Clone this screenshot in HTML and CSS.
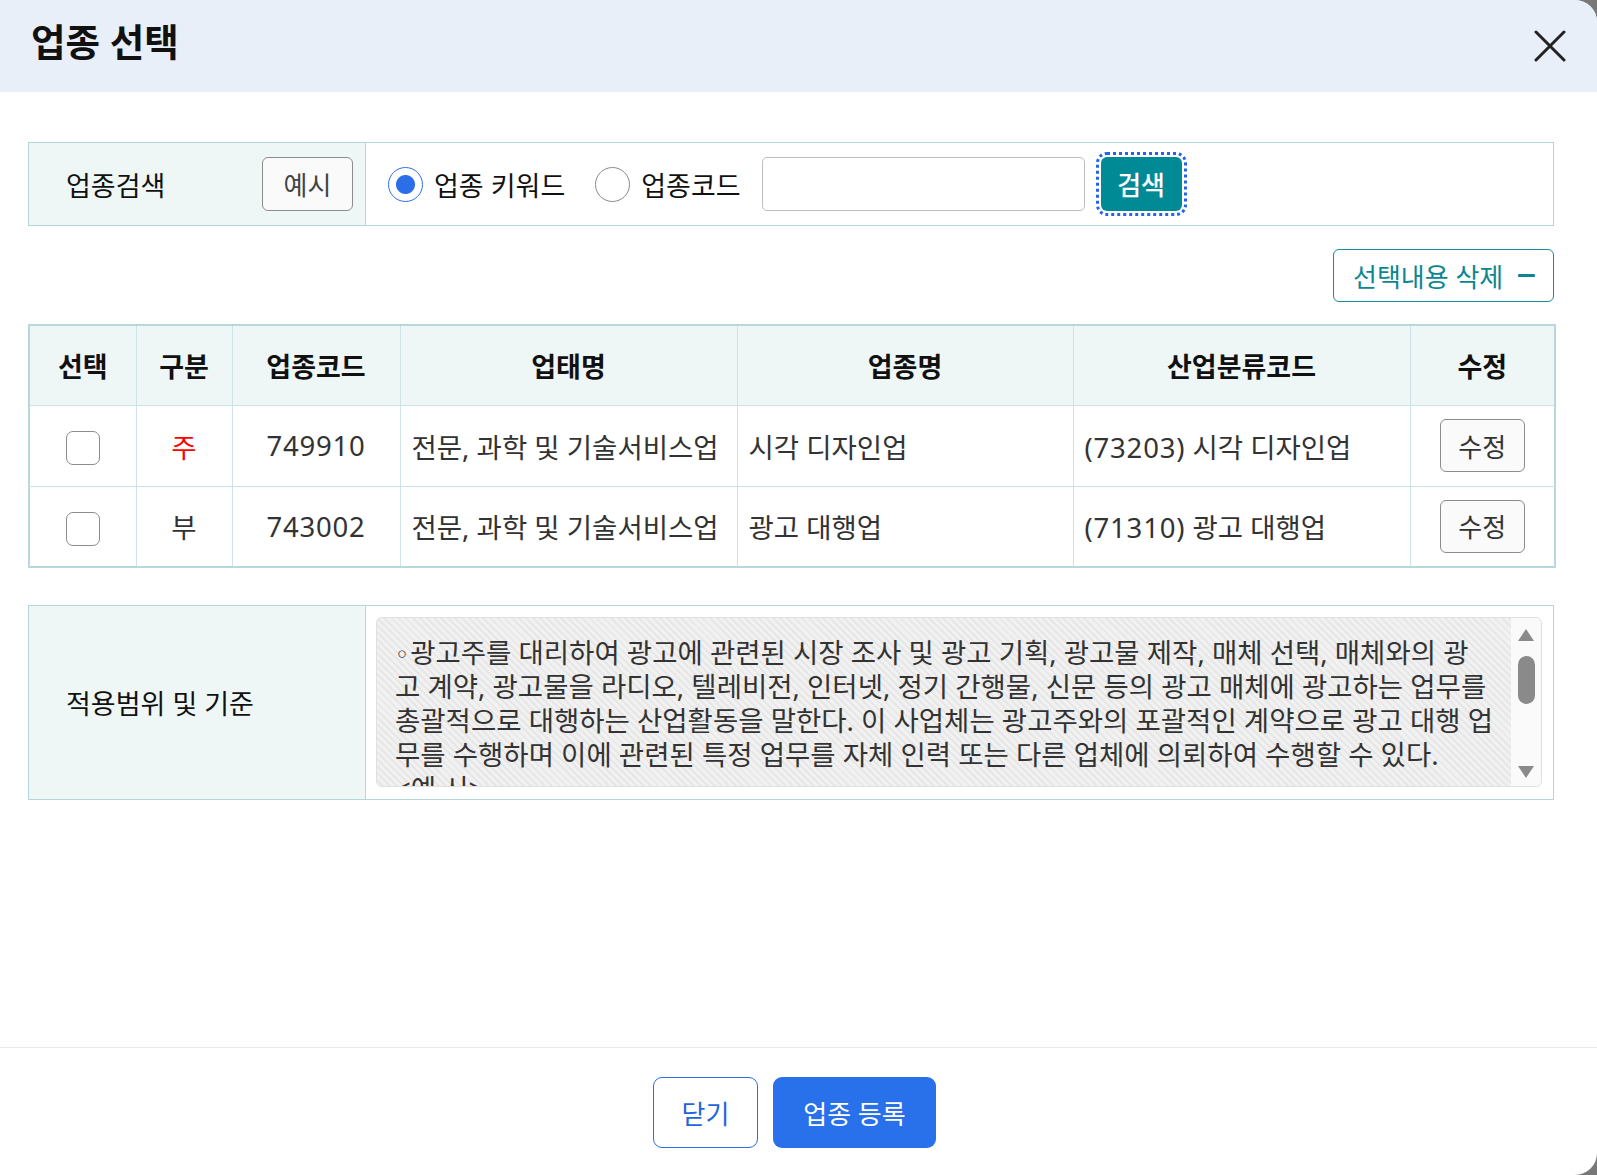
FILE: index.html
```html
<!DOCTYPE html>
<html lang="ko">
<head>
<meta charset="utf-8">
<title>업종 선택</title>
<link rel="stylesheet" href="styles.css">
</head>
<body>
<div class="dialog">
  <header class="dlg-head">
    <h1 class="dlg-title">업종 선택</h1>
    <button class="close-btn" type="button" aria-label="닫기">
      <svg width="32" height="32" viewBox="0 0 32 32"><path d="M2 2 L30 30 M30 2 L2 30" stroke="#222" stroke-width="3" stroke-linecap="round" fill="none"/></svg>
    </button>
  </header>

  <main class="dlg-body">
    <div class="form-box search-box">
      <div class="label-cell split">
        <span>업종검색</span>
        <button class="btn-gray btn-example" type="button">예시</button>
      </div>
      <div class="field-cell search-fields">
        <label class="radio-item"><input type="radio" name="type" class="radio" checked><span>업종 키워드</span></label>
        <label class="radio-item"><input type="radio" name="type" class="radio"><span>업종코드</span></label>
        <input type="text" class="text-input">
        <button class="btn-search" type="button">검색</button>
      </div>
    </div>

    <div class="toolbar">
      <button class="btn-del" type="button"><span>선택내용 삭제</span><span class="minus"></span></button>
    </div>

    <table class="grid">
      <colgroup>
        <col class="c1"><col class="c2"><col class="c3"><col class="c4"><col class="c5"><col class="c6"><col class="c7">
      </colgroup>
      <thead>
        <tr><th>선택</th><th>구분</th><th>업종코드</th><th>업태명</th><th>업종명</th><th>산업분류코드</th><th>수정</th></tr>
      </thead>
      <tbody>
        <tr>
          <td class="center"><input type="checkbox" class="check"></td>
          <td class="center main-type">주</td>
          <td class="center num">749910</td>
          <td>전문, 과학 및 기술서비스업</td>
          <td>시각 디자인업</td>
          <td><span class="num">(73203)</span> 시각 디자인업</td>
          <td class="center"><button class="btn-gray btn-edit" type="button">수정</button></td>
        </tr>
        <tr>
          <td class="center"><input type="checkbox" class="check"></td>
          <td class="center">부</td>
          <td class="center num">743002</td>
          <td>전문, 과학 및 기술서비스업</td>
          <td>광고 대행업</td>
          <td><span class="num">(71310)</span> 광고 대행업</td>
          <td class="center"><button class="btn-gray btn-edit" type="button">수정</button></td>
        </tr>
      </tbody>
    </table>

    <div class="form-box desc-box">
      <div class="label-cell">적용범위 및 기준</div>
      <div class="field-cell desc-cell">
        <div class="readonly-area">
          <div class="area-text"><span class="bullet">◦</span>광고주를 대리하여 광고에 관련된 시장 조사 및 광고 기획, 광고물 제작, 매체 선택, 매체와의 광<br>고 계약, 광고물을 라디오, 텔레비전, 인터넷, 정기 간행물, 신문 등의 광고 매체에 광고하는 업무를<br>총괄적으로 대행하는 산업활동을 말한다. 이 사업체는 광고주와의 포괄적인 계약으로 광고 대행 업<br>무를 수행하며 이에 관련된 특정 업무를 자체 인력 또는 다른 업체에 의뢰하여 수행할 수 있다.<br>&lt;예 시&gt;</div>
          <div class="scrollbar">
            <span class="arrow-up"></span>
            <span class="thumb"></span>
            <span class="arrow-down"></span>
          </div>
        </div>
      </div>
    </div>
  </main>

  <footer class="dlg-foot">
    <button class="btn-outline" type="button">닫기</button>
    <button class="btn-primary" type="button">업종 등록</button>
  </footer>
</div>
</body>
</html>
```

FILE: styles.css
```css
* { box-sizing: border-box; }

html, body {
  margin: 0;
  height: 100%;
}

body {
  background: #787878;
  font-family: "Noto Sans", "Noto Sans CJK KR", sans-serif;
  color: #222;
  overflow: hidden;
}

button, input {
  font-family: inherit;
}

.dialog {
  width: 1597px;
  height: 1175px;
  background: #fff;
  border-radius: 0 22px 22px 0;
  overflow: hidden;
  display: flex;
  flex-direction: column;
}

/* header */
.dlg-head {
  height: 92px;
  flex: none;
  background: #e8eff9;
  display: flex;
  align-items: center;
  justify-content: space-between;
  padding: 0 31px 8px 31px;
}

.dlg-title {
  margin: 0;
  font-size: 37.5px;
  font-weight: 700;
  color: #111;
  line-height: 1;
}

.close-btn {
  border: 0;
  background: none;
  padding: 0;
  width: 32px;
  height: 32px;
  display: flex;
  margin-top: 8px;
}

/* body */
.dlg-body {
  flex: 1;
  padding: 50px 43px 0 28px;
  font-size: 27px;
}

.form-box {
  display: flex;
  border: 1px solid #b3d6db;
}

.label-cell {
  width: 337px;
  flex: none;
  background: #eef7f6;
  border-right: 1px solid #b3d6db;
  display: flex;
  align-items: center;
  padding: 0 12px 0 37px;
  color: #111;
}

.label-cell.split {
  justify-content: space-between;
}

.field-cell {
  flex: 1;
  display: flex;
  align-items: center;
}

.search-box {
  height: 84px;
}

.search-fields {
  padding-left: 22px;
}

.radio-item {
  display: flex;
  align-items: center;
  gap: 11px;
  margin-right: 30px;
  color: #111;
}

.radio-item:nth-child(2) {
  margin-right: 21px;
}

.radio {
  appearance: none;
  -webkit-appearance: none;
  margin: 0;
  width: 35px;
  height: 35px;
  border: 1.5px solid #8a8a8a;
  border-radius: 50%;
  background: #fff;
}

.radio:checked {
  border-color: #2d72e8;
  background: radial-gradient(circle, #2a6fe8 0 9px, #fff 10px);
}

.text-input {
  width: 323px;
  height: 54px;
  border: 1px solid #bdbdbd;
  border-radius: 5px;
  margin: 0;
}

.btn-search {
  margin-left: 16px;
  width: 81px;
  height: 54px;
  border: 0;
  border-radius: 6px;
  background: #008a96;
  color: #fff;
  font-size: 26px;
  font-weight: 500;
  outline: 3px dotted #2563eb;
  outline-offset: 2px;
}

.btn-gray {
  border: 1px solid #8c8c8c;
  border-radius: 6px;
  background: #fafafa;
  color: #444;
  font-size: 26px;
  padding: 0;
}

.btn-example {
  width: 91px;
  height: 54px;
}

.btn-edit {
  width: 85px;
  height: 53px;
  color: #333;
}

/* toolbar */
.toolbar {
  display: flex;
  justify-content: flex-end;
  margin-top: 23px;
}

.btn-del {
  width: 221px;
  height: 53px;
  border: 1px solid #168c96;
  border-radius: 6px;
  background: #fff;
  color: #0b8791;
  font-size: 26px;
  display: flex;
  align-items: center;
  justify-content: space-between;
  padding: 0 18px 0 19px;
}

.minus {
  width: 17px;
  height: 3px;
  background: #0b8791;
  border-radius: 1px;
}

/* table */
.grid {
  width: 100%;
  margin-top: 22px;
  border-collapse: collapse;
  table-layout: fixed;
  border: 2px solid #b7d8dd;
  font-size: 27.5px;
  color: #333;
}

.c1 { width: 107px; }
.c2 { width: 96px; }
.c3 { width: 168px; }
.c4 { width: 337px; }
.c5 { width: 336px; }
.c6 { width: 337px; }
.c7 { width: 145px; }

.grid th,
.grid td {
  border: 1px solid #cde4e7;
  height: 81px;
  padding: 0 11px;
  vertical-align: middle;
  white-space: nowrap;
}

.grid th {
  height: 80px;
  font-size: 27px;
  background: #eef7f6;
  color: #111;
  font-weight: 700;
  text-align: center;
}

.grid td.center {
  text-align: center;
}

.num {
  letter-spacing: 0.8px;
}

.main-type {
  color: #ff0000;
}

.check {
  appearance: none;
  -webkit-appearance: none;
  margin: 0;
  width: 34px;
  height: 34px;
  border: 1.5px solid #8c8c8c;
  border-radius: 7px;
  background: #fff;
  vertical-align: middle;
}

/* description */
.desc-box {
  margin-top: 37px;
  height: 195px;
}

.desc-cell {
  padding: 11px 11px 12px 10px;
  align-items: stretch;
}

.readonly-area {
  flex: 1;
  display: flex;
  border: 1px solid #e0e0e0;
  border-radius: 6px;
  overflow: hidden;
  background: repeating-linear-gradient(45deg, #f1f1f1 0 3px, #e7e7e7 3px 5px);
}

.area-text {
  flex: 1;
  padding: 18px 0 0 18px;
  font-size: 27.5px;
  line-height: 34px;
  color: #333;
  white-space: nowrap;
  overflow: hidden;
}

.bullet {
  font-family: "DejaVu Sans", sans-serif;
  font-size: 24px;
  line-height: 0;
  margin-right: 1px;
}

.scrollbar {
  width: 30px;
  flex: none;
  background: #fafafa;
  display: flex;
  flex-direction: column;
  align-items: center;
  padding-top: 11px;
}

.arrow-up,
.arrow-down {
  width: 0;
  height: 0;
  border-left: 8px solid transparent;
  border-right: 8px solid transparent;
}

.arrow-up {
  border-bottom: 12px solid #8a8a8a;
}

.arrow-down {
  border-top: 12px solid #8a8a8a;
  margin-top: 62px;
}

.thumb {
  width: 17px;
  height: 48px;
  border-radius: 9px;
  background: #8a8a8a;
  margin-top: 15px;
}

/* footer */
.dlg-foot {
  flex: none;
  height: 128px;
  border-top: 1px solid #e6ebf2;
  display: flex;
  justify-content: center;
  align-items: flex-start;
  gap: 15px;
  padding-top: 29px;
  padding-right: 8px;
}

.btn-outline,
.btn-primary {
  height: 71px;
  border-radius: 9px;
  font-size: 26px;
  padding: 0;
}

.btn-outline {
  width: 105px;
  border: 1.5px solid #2b6de6;
  background: #fff;
  color: #1f64e0;
}

.btn-primary {
  width: 163px;
  border: 0;
  background: #2970eb;
  color: #fff;
}
```
